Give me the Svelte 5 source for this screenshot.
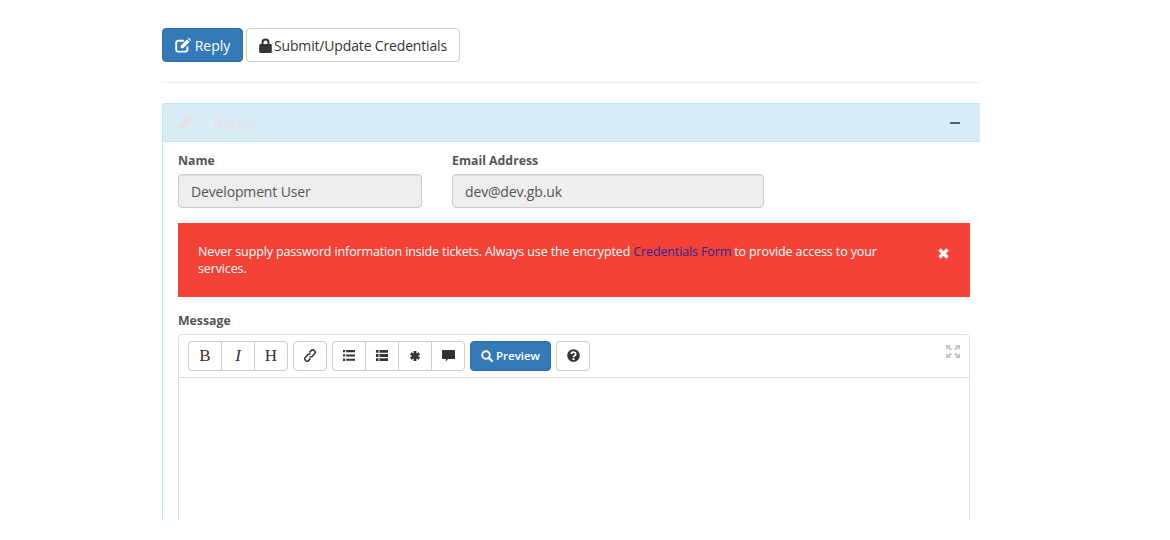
<script>
  let name = "Development User";
  let email = "dev@dev.gb.uk";
</script>

<div class="page">
  <div class="tabs">
    <button class="btn primary">
      <svg width="16" height="15" viewBox="0 0 16 15"><path fill="none" stroke="currentColor" stroke-width="1.9" d="M12.4 8.6v3.2a1.8 1.8 0 0 1-1.8 1.8H3a1.8 1.8 0 0 1-1.8-1.8V4.6A1.8 1.8 0 0 1 3 2.800h6"/><path fill="currentColor" d="M5.600 7.800 12 1.400l2.500 2.500-6.400 6.400H5.600zM12.800.6l.6-.5h.6l1.900 1.900v.6l-.5.6z"/></svg>
      <span class="reply">Reply</span>
    </button>
    <button class="btn plain">
      <svg width="13" height="15" viewBox="0 0 13 15"><path fill="#333" d="M1.500 6H2.500V4.500a4 4 0 0 1 8 0V6h1A1.300 1.300 0 0 1 12.800 7.300v6.400A1.300 1.300 0 0 1 11.500 15h-10A1.300 1.300 0 0 1 .2 13.700V7.300A1.300 1.300 0 0 1 1.500 6zM4.500 6h4V4.500a2 2 0 0 0-4 0z"/></svg>
      <span class="creds">Submit/Update Credentials</span>
    </button>
  </div>
  <hr />

  <section class="panel">
    <header class="panel-head">
      <div class="panel-title">
        <svg width="15" height="15" viewBox="0 0 15 15"><path fill="#e9e2e3" d="M0 15l1-4.500L10 1.500l3.500 3.500-9 9zM11 .5l.7-.5h.8l2.500 2.500v.8l-.6.7z"/></svg>
        <span>Reply</span>
      </div>
      <span class="minus"></span>
    </header>

    <div class="panel-body">
      <div class="fields">
        <label class="field name">
          <span>Name</span>
          <input type="text" disabled value={name} />
        </label>
        <label class="field mail">
          <span>Email Address</span>
          <input type="text" disabled value={email} />
        </label>
      </div>

      <div class="alert">
        <p>Never supply password information inside tickets. Always use the encrypted <a href="#creds">Credentials Form</a> to provide access to your services.</p>
        <svg class="close" width="11" height="11" viewBox="0 0 11 11"><path fill="none" stroke="#fff" stroke-width="3.400" d="M1.500 1.500l8 8M9.500 1.500l-8 8"/></svg>
      </div>

      <div class="msg-label">Message</div>
      <div class="editor">
        <div class="toolbar">
          <div class="group">
            <button class="tool serif">B</button>
            <button class="tool serif i">I</button>
            <button class="tool serif">H</button>
          </div>
          <div class="group">
            <button class="tool" aria-label="Link">
              <svg width="12" height="13" viewBox="0 0 12 13"><g fill="none" stroke="#333" stroke-width="1.600"><path d="M5.500 3.500l2-2.200a1.700 1.700 0 0 1 2.500 0l.7.700a1.700 1.700 0 0 1 0 2.500L8 7.500a1.700 1.700 0 0 1-2.500 0"/><path d="M6.500 9.500l-2 2.200a1.700 1.700 0 0 1-2.500 0L1.300 11a1.700 1.700 0 0 1 0-2.500L4 5.500a1.700 1.700 0 0 1 2.500 0"/></g></svg>
            </button>
          </div>
          <div class="group">
            <button class="tool" aria-label="Bullet list">
              <svg width="12" height="11" viewBox="0 0 12 11"><path fill="#333" d="M0 0h2.200v2.300H0zM3.200 .1H12v2.100H3.200zM0 4.300h2.200v2.300H0zM3.200 4.400H12v2.100H3.200zM0 8.600h2.200v2.300H0zM3.200 8.700H12v2.100H3.200z"/></svg>
            </button>
            <button class="tool" aria-label="Numbered list">
              <svg width="12" height="11" viewBox="0 0 12 11"><path fill="#333" d="M3.500 0H12v2.800H3.500zM3.500 4.100H12v2.800H3.500zM3.500 8.200H12V11H3.500z"/><path fill="#5a1f2a" d="M0 0h2.500v2.800H0zM0 4.100h2.500v2.800H0zM0 8.200h2.500V11H0z"/></svg>
            </button>
            <button class="tool" aria-label="Asterisk">
              <svg width="10" height="10" viewBox="0 0 10 10"><path fill="none" stroke="#333" stroke-width="2.800" d="M5 0v10M.7 2.500l8.600 5M9.300 2.500l-8.600 5"/></svg>
            </button>
            <button class="tool" aria-label="Comment">
              <svg width="13" height="12" viewBox="0 0 13 12"><path fill="#333" d="M.7 0h11.600a.7.7 0 0 1 .7.7v7.600a.7.7 0 0 1-.7.7H6L3.800 11.500V9H.7a.7.7 0 0 1-.7-.7V.7A.7.7 0 0 1 .7 0z"/></svg>
            </button>
          </div>
          <button class="btn primary preview">
            <svg width="12" height="12" viewBox="0 0 12 12"><circle cx="5" cy="5" r="3.800" fill="none" stroke="currentColor" stroke-width="1.900"/><path d="M7.800 7.800l3.200 3.200" stroke="currentColor" stroke-width="2.400" stroke-linecap="round"/></svg>
            <span class="preview-text">Preview</span>
          </button>
          <div class="group">
            <button class="tool help" aria-label="Help">
              <svg width="13" height="13" viewBox="0 0 13 13"><circle cx="6.500" cy="6.500" r="6.300" fill="#333"/><path fill="none" stroke="#fff" stroke-width="1.800" d="M4.300 5a2.200 1.900 0 1 1 3.500 1.500c-.9.600-1.300.9-1.300 1.700"/><path fill="#fff" d="M5.500 9.200h2v1.800h-2z"/></svg>
            </button>
          </div>
          <svg class="expand" width="14" height="13" viewBox="0 0 14 13"><path fill="#c4c4c4" d="M0 0h5L3.500 1.500 6 4 4.500 5.500 2 3 0 5zM14 0H9l1.500 1.500L8 4l1.500 1.500L12 3l2 2zM0 13h5L3.500 11.500 6 9 4.500 7.500 2 10l-2-2zM14 13H9l1.500-1.500L8 9l1.500-1.500L12 10l2-2z"/></svg>
        </div>
        <div class="textarea"></div>
      </div>
    </div>
  </section>
</div>

<style>
  :global(body) {
    background: #fff;
  }

  .page {
    width: 818px;
    height: 520px;
    margin-left: 162px;
    padding-top: 28px;
    box-sizing: border-box;
    overflow: hidden;
    font-family: "Open Sans", "Noto Sans", sans-serif;
    font-size: 13px;
    color: #555;
  }

  .tabs {
    display: flex;
    gap: 3px;
  }

  button {
    font-family: inherit;
  }

  .btn {
    display: flex;
    align-items: center;
    justify-content: center;
    height: 34px;
    border-radius: 4px;
    padding: 0;
    font-size: 14px;
    box-sizing: border-box;
  }

  .primary {
    background: #337ab7;
    border: 1px solid #2e6da4;
    color: #fff;
    width: 81px;
    gap: 4px;
  }

  .reply {
    font-weight: 500;
  }

  .plain {
    background: #fff;
    border: 1px solid #ccc;
    color: #333;
    width: 214px;
    gap: 2px;
  }

  .creds {
    letter-spacing: -.16px;
  }

  hr {
    border: 0;
    border-top: 1px solid #eee;
    margin: 20px 0;
  }

  .panel-head {
    display: flex;
    align-items: center;
    justify-content: space-between;
    height: 39px;
    box-sizing: border-box;
    background: #d9edf7;
    border: 1px solid #bce8f1;
    border-right: 0;
    border-radius: 4px 0 0 0;
    padding: 0 20px 0 15px;
  }

  .panel-title {
    display: flex;
    align-items: center;
    gap: 20px;
    font-size: 16px;
    color: #e9e2e3;
  }

  .minus {
    width: 10px;
    height: 2px;
    background: #31708f;
  }

  .panel-body {
    border-left: 1px solid #bce8f1;
    padding: 10px 10px 0 15px;
  }

  .fields {
    display: flex;
    gap: 30px;
  }

  .field {
    display: flex;
    flex-direction: column;
    gap: 5px;
  }

  .field span,
  .msg-label {
    font-size: 12.300px;
    font-weight: 700;
    line-height: 17px;
    color: #555;
  }

  .name { width: 244px; }
  .mail { width: 312px; }

  input {
    height: 34px;
    box-sizing: border-box;
    width: 100%;
    background: #eee;
    border: 1px solid #ccc;
    border-radius: 4px;
    padding: 0 12px;
    font-family: inherit;
    font-size: 14px;
    letter-spacing: -.15px;
    color: #555;
    opacity: 1;
    box-shadow: inset 0 1px 1px rgba(0, 0, 0, .075);
  }

  .alert {
    display: flex;
    justify-content: space-between;
    height: 74px;
    box-sizing: border-box;
    margin-top: 15px;
    background: #f44336;
    color: #fff;
    padding: 20px 21px 0 20px;
  }

  .alert p {
    margin: 0;
    width: 700px;
    font-size: 12.500px;
    letter-spacing: -.13px;
    line-height: 17px;
  }

  .alert a {
    color: #26269a;
    text-decoration: none;
  }

  .close {
    margin-top: 5px;
  }

  .msg-label {
    margin-top: 15px;
  }

  .editor {
    margin-top: 5px;
    border: 1px solid #ddd;
    border-radius: 4px 4px 0 0;
  }

  .toolbar {
    position: relative;
    display: flex;
    align-items: center;
    gap: 5px;
    height: 43px;
    box-sizing: border-box;
    padding: 0 9px;
    border-bottom: 1px solid #ddd;
  }

  .group {
    display: flex;
  }

  .tool {
    display: flex;
    align-items: center;
    justify-content: center;
    width: 34px;
    height: 30px;
    box-sizing: border-box;
    padding: 0 0 1px;
    background: #fff;
    border: 1px solid #ccc;
    margin-left: -1px;
    color: #333;
  }

  .tool:first-child {
    margin-left: 0;
    border-radius: 4px 0 0 4px;
  }

  .tool:last-child {
    border-radius: 0 4px 4px 0;
  }

  .tool:only-child {
    border-radius: 4px;
  }

  .serif {
    font-family: "Liberation Serif", serif;
    font-size: 17px;
  }

  .i { font-style: italic; }

  .preview {
    height: 30px;
    font-size: 11.500px;
    font-weight: 600;
    gap: 3px;
    padding-bottom: 1px;
  }

  .expand {
    position: absolute;
    top: 10px;
    right: 9px;
  }

  .textarea {
    height: 300px;
  }
</style>
